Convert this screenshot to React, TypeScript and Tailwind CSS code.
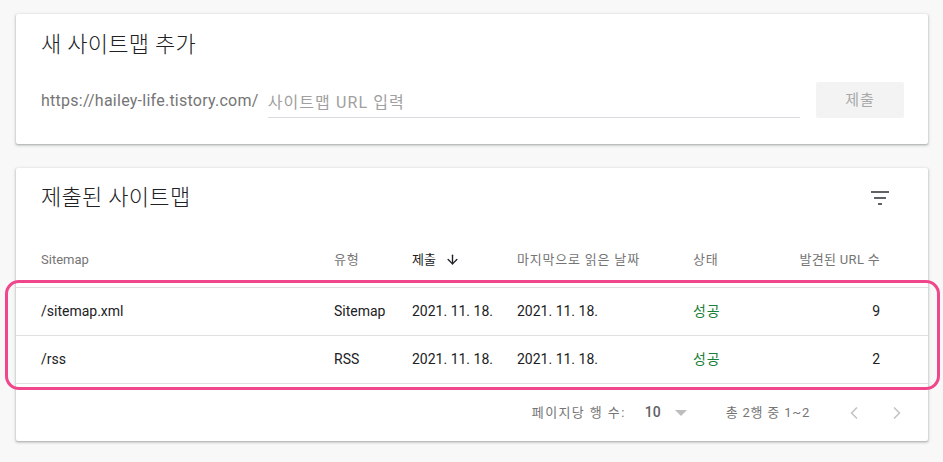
import { ArrowDown, ChevronLeft, ChevronRight } from "lucide-react"

const font = "font-['Roboto','Noto_Sans_CJK_KR',sans-serif]"

const rows = [
    { path: "/sitemap.xml", type: "Sitemap", submitted: "2021. 11. 18.", read: "2021. 11. 18.", status: "성공", count: 9 },
    { path: "/rss", type: "RSS", submitted: "2021. 11. 18.", read: "2021. 11. 18.", status: "성공", count: 2 },
]

const cols = "grid grid-cols-[1fr_78px_105px_176px_87px_100px] items-center pl-[25px] pr-[48px]"

function FilterIcon() {
    return (
        <svg width="24" height="24" viewBox="0 0 24 24" className="text-[#5f6368]">
            <path d="M3 6h18M6 12h12M10 18h4" stroke="currentColor" strokeWidth="2" fill="none" />
        </svg>
    )
}

export default function App() {
    return (
        <div className={`relative min-h-[462px] w-[943px] bg-[#f8f8f8] pt-[14px] ${font}`}>
            <div className="ml-4 w-[912px] rounded-[2px] bg-white shadow-[0_1px_2px_0_rgba(60,64,67,0.3),0_1px_3px_1px_rgba(60,64,67,0.15)] pl-[25px] pr-6 pt-[17px] pb-[26px]">
                <h2 className="text-[22px] leading-[28px] font-light tracking-[0.3px] text-[#202124]">새 사이트맵 추가</h2>
                <div className="mt-[23px] flex items-center">
                    <span className="text-[16px] tracking-[0.25px] text-[#757575] mr-[9px] pt-[2px]">https://hailey-life.tistory.com/</span>
                    <div className="flex-1 h-[36px] flex items-end">
                        <div className="w-full border-b border-[#dadce0] pb-[2px] text-[16px] leading-[24px] tracking-[1.1px] text-[#a0a0a0]">사이트맵 URL 입력</div>
                    </div>
                    <button className="ml-4 h-9 w-[88px] rounded-[2px] bg-[#f3f3f3] text-[15px] tracking-[1px] text-[#a8a8a8]">제출</button>
                </div>
            </div>

            <div className="ml-4 mt-6 w-[912px] rounded-[2px] bg-white shadow-[0_1px_2px_0_rgba(60,64,67,0.3),0_1px_3px_1px_rgba(60,64,67,0.15)]">
                <div className="flex items-center justify-between pl-[25px] pr-9 pt-4">
                    <h2 className="text-[22px] leading-[28px] font-light tracking-[0.3px] text-[#202124]">제출된 사이트맵</h2>
                    <FilterIcon />
                </div>
                <div className={`${cols} mt-5 h-14 border-b border-[#e0e0e0] text-[13px] text-[#757575]`}>
                    <span>Sitemap</span>
                    <span className="tracking-[0.8px]">유형</span>
                    <span className="flex items-center gap-[9px] text-[#202124]">
                        제출 <ArrowDown size={15} strokeWidth={2.2} />
                    </span>
                    <span className="tracking-[0.8px]">마지막으로 읽은 날짜</span>
                    <span className="tracking-[0.8px]">상태</span>
                    <span className="text-right tracking-[0.3px]">발견된 URL 수</span>
                </div>
                {rows.map((r) => (
                    <div key={r.path} className={`${cols} h-12 border-b border-[#e0e0e0] text-[14px] text-[#202124]`}>
                        <span>{r.path}</span>
                        <span>{r.type}</span>
                        <span>{r.submitted}</span>
                        <span>{r.read}</span>
                        <span className="tracking-[0.8px] text-[#188038]">{r.status}</span>
                        <span className="text-right">{r.count}</span>
                    </div>
                ))}
                <div className="flex h-[57px] items-center justify-end pr-[21px] text-[13px] text-[#757575]">
                    <span className="tracking-[1.4px]">페이지당 행 수:</span>
                    <span className="ml-[19px] font-medium text-[#616161] text-[14px]">10</span>
                    <svg width="12" height="6" viewBox="0 0 12 6" className="ml-[14px]">
                        <path d="M0 0h12L6 6z" fill="#bdbdbd" />
                    </svg>
                    <span className="ml-[39px] tracking-[0.8px]">총 2행 중 1~2</span>
                    <ChevronLeft size={20} className="ml-[34px] text-[#c4c4c4]" />
                    <ChevronRight size={20} className="ml-[23px] text-[#c4c4c4]" />
                </div>
            </div>

            {/* highlight around the result rows */}
            <div className="absolute left-[5px] top-[280px] h-[110px] w-[935px] rounded-[14px] border-[3px] border-[#f0468c]" />
        </div>
    )
}
